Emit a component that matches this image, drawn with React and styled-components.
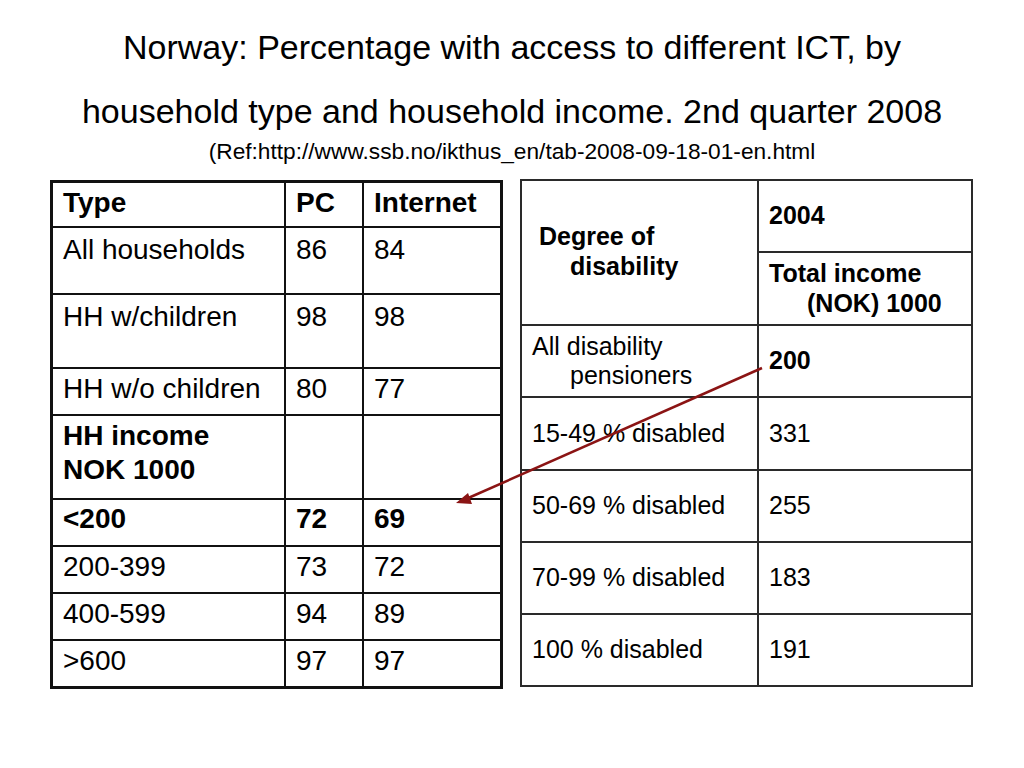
import React from "react";
import styled, { createGlobalStyle } from "styled-components";

const GlobalStyle = createGlobalStyle`
  html, body {
    margin: 0;
    padding: 0;
    background: #ffffff;
  }
  body {
    font-family: "Liberation Sans", Arial, Helvetica, sans-serif;
    color: #000;
  }
`;

const Slide = styled.div`
  position: relative;
  width: 1024px;
  height: 768px;
  padding-top: 25px;
  box-sizing: border-box;
  background: #fff;
  overflow: hidden;
`;

const TitleLine = styled.div`
  text-align: center;
  font-size: 34px;
  line-height: 44px;
  margin-top: ${(p) => p.$gap || 0}px;
  white-space: nowrap;
`;

const RefLine = styled.div`
  text-align: center;
  font-size: 22.7px;
  line-height: 26px;
  margin-top: 5px;
  white-space: nowrap;
`;

const Tables = styled.div`
  display: flex;
  align-items: flex-start;
  gap: 17px;
  padding-left: 50px;
  margin-top: 15px;
`;

// left table: thick frame, grid gap draws the inner rules
const LeftGrid = styled.div`
  display: grid;
  grid-template-columns: 231px 76px 136px;
  grid-template-rows: 43px 65px 72px 45px 82px 45px 45px 45px 45px;
  gap: 2px;
  background: #111;
  border: 3px solid #111;
  margin-top: 1px;
`;

const LCell = styled.div`
  background: #fff;
  font-size: 28px;
  line-height: 1.2;
  padding: ${(p) => (p.$pt != null ? p.$pt : 4)}px 6px 0 10px;
  font-weight: ${(p) => (p.$bold ? 700 : 400)};
  white-space: nowrap;
  overflow: hidden;
`;

const RightGrid = styled.div`
  display: grid;
  grid-template-columns: 235px 212px;
  grid-template-rows: 70px 71px 70px 71px 70px 70px 70px;
  gap: 2px;
  background: #2a2a2a;
  border: 2px solid #2a2a2a;
`;

const RCell = styled.div`
  background: #fff;
  display: flex;
  align-items: center;
  font-size: 25px;
  line-height: 1.18;
  font-weight: ${(p) => (p.$bold ? 700 : 400)};
  grid-row: ${(p) => (p.$span ? `span ${p.$span}` : "auto")};
`;

const CellText = styled.div`
  padding-left: ${(p) => 10 + (p.$hang || 0)}px;
  text-indent: ${(p) => -(p.$hang || 0) + (p.$lead || 0)}px;
  padding-bottom: ${(p) => p.$pb || 0}px;
  white-space: nowrap;
`;

const Overlay = styled.svg`
  position: absolute;
  left: 0;
  top: 0;
  width: 1024px;
  height: 768px;
  pointer-events: none;
`;

const leftRows = [
  { cells: ["Type", "PC", "Internet"], bold: true, pt: 3 },
  { cells: ["All households", "86", "84"], pt: 5 },
  { cells: ["HH w/children", "98", "98"], pt: 5 },
  { cells: ["HH w/o children", "80", "77"], pt: 3 },
  { cells: [["HH income", "NOK 1000"], "", ""], bold: true, pt: 3 },
  { cells: ["<200", "72", "69"], bold: true, pt: 2 },
  { cells: ["200-399", "73", "72"], pt: 3 },
  { cells: ["400-599", "94", "89"], pt: 3 },
  { cells: [">600", "97", "97"], pt: 3 },
];

const rightRows = [
  ["15-49 % disabled", "331"],
  ["50-69 % disabled", "255"],
  ["70-99 % disabled", "183"],
  ["100 % disabled", "191"],
];

function LeftTable() {
  return (
    <LeftGrid>
      {leftRows.map((row, i) =>
        row.cells.map((c, j) => (
          <LCell key={`${i}-${j}`} $bold={row.bold} $pt={row.pt}>
            {Array.isArray(c) ? (
              <>
                {c[0]}
                <br />
                {c[1]}
              </>
            ) : (
              c
            )}
          </LCell>
        ))
      )}
    </LeftGrid>
  );
}

function RightTable() {
  return (
    <RightGrid>
      <RCell $bold $span={2}>
        <CellText $hang={38} $lead={7} $pb={2}>
          Degree of
          <br />
          disability
        </CellText>
      </RCell>
      <RCell $bold>
        <CellText>2004</CellText>
      </RCell>
      <RCell $bold>
        <CellText $hang={38}>
          Total income
          <br />
          (NOK) 1000
        </CellText>
      </RCell>
      <RCell>
        <CellText $hang={38}>
          All disability
          <br />
          pensioners
        </CellText>
      </RCell>
      <RCell $bold>
        <CellText>200</CellText>
      </RCell>
      {rightRows.map(([a, b]) => (
        <React.Fragment key={a}>
          <RCell>
            <CellText>{a}</CellText>
          </RCell>
          <RCell>
            <CellText>{b}</CellText>
          </RCell>
        </React.Fragment>
      ))}
    </RightGrid>
  );
}

export default function App() {
  return (
    <>
      <GlobalStyle />
      <Slide>
        <TitleLine>Norway: Percentage with access to different ICT, by</TitleLine>
        <TitleLine $gap={20}>
          household type and household income. 2nd quarter 2008
        </TitleLine>
        <RefLine>(Ref:http://www.ssb.no/ikthus_en/tab-2008-09-18-01-en.html</RefLine>
        <Tables>
          <LeftTable />
          <RightTable />
        </Tables>
        <Overlay viewBox="0 0 1024 768">
          <line x1="762" y1="368" x2="466" y2="499" stroke="#8b1414" strokeWidth="2.5" />
          <polygon points="456,503 468,493 472,504" fill="#8b1414" />
        </Overlay>
      </Slide>
    </>
  );
}
